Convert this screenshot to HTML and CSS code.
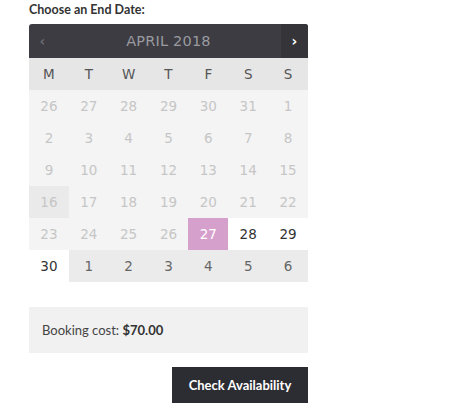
FILE: index.html
```html
<!DOCTYPE html>
<html>
<head>
<meta charset="utf-8">
<link rel="stylesheet" href="styles.css">
</head>
<body>
<div class="wrap">
  <div class="title">Choose an End Date:</div>
  <div class="cal">
    <div class="cal-head">
      <span class="nav prev">&#8249;</span>
      <span class="month">APRIL 2018</span>
      <span class="nav next">&#8250;</span>
    </div>
    <div class="grid">
      <div class="wd">M</div><div class="wd">T</div><div class="wd">W</div><div class="wd">T</div><div class="wd">F</div><div class="wd">S</div><div class="wd">S</div>
      <div class="d off">26</div><div class="d off">27</div><div class="d off">28</div><div class="d off">29</div><div class="d off">30</div><div class="d off">31</div><div class="d off">1</div>
      <div class="d off">2</div><div class="d off">3</div><div class="d off">4</div><div class="d off">5</div><div class="d off">6</div><div class="d off">7</div><div class="d off">8</div>
      <div class="d off">9</div><div class="d off">10</div><div class="d off">11</div><div class="d off">12</div><div class="d off">13</div><div class="d off">14</div><div class="d off">15</div>
      <div class="d off today">16</div><div class="d off">17</div><div class="d off">18</div><div class="d off">19</div><div class="d off">20</div><div class="d off">21</div><div class="d off">22</div>
      <div class="d off">23</div><div class="d off">24</div><div class="d off">25</div><div class="d off">26</div><div class="d sel">27</div><div class="d av">28</div><div class="d av">29</div>
      <div class="d av">30</div><div class="d nx">1</div><div class="d nx">2</div><div class="d nx">3</div><div class="d nx">4</div><div class="d nx">5</div><div class="d nx">6</div>
    </div>
  </div>
  <div class="cost">Booking cost: <strong>$70.00</strong></div>
  <div class="actions"><button class="btn">Check Availability</button></div>
</div>
</body>
</html>
```
FILE: styles.css
```css
html, body { margin: 0; padding: 0; background: #fff; }
.wrap { width: 279px; padding: 2px 0 0 29px; font-family: "Lato", "Liberation Sans", sans-serif; }
.title { font-weight: 700; font-size: 12.5px; color: #333; line-height: 16px; height: 22px; }
.cal { width: 279px; }
.cal-head {
  background: #3c3c42; height: 34px; border-radius: 3px 3px 0 0;
  display: flex; align-items: center;
}
.nav { width: 27px; height: 34px; display: flex; align-items: center; justify-content: center; font-family: "DejaVu Sans", sans-serif; font-size: 14px; font-weight: 700; }
.prev { color: #6b6b70; }
.next { color: #fff; background: #343439; border-radius: 0 3px 0 0; }
.month { flex: 1; text-align: center; color: #9a9aa0; font-family: "DejaVu Sans", sans-serif; font-size: 14.5px; letter-spacing: 0.2px; }
.grid { display: grid; grid-template-columns: repeat(7, 1fr); background: #f4f4f4; }
.wd { background: #e6e6e6; height: 32px; line-height: 32px; text-align: center; color: #555; font-family: "DejaVu Sans", sans-serif; font-size: 13.5px; }
.d { height: 32px; line-height: 32px; text-align: center; font-family: "DejaVu Sans", sans-serif; font-size: 13.5px; }
.off { color: #c6c6c6; }
.today { background: #eaeaea; }
.sel { background: #d6a0cd; color: #fff; }
.av { background: #fff; color: #333; }
.nx { background: #ebebeb; color: #666; }
.cost { margin-top: 25px; background: #f1f1f1; height: 46px; line-height: 46px; padding-left: 13px; font-size: 13px; color: #444; }
.cost strong { color: #333; }
.actions { display: flex; justify-content: flex-end; margin-top: 14px; }
.btn { background: #2c2c33; color: #fff; border: 0; height: 36px; width: 136px; font-family: "Lato", "Liberation Sans", sans-serif; font-weight: 700; font-size: 13px; padding: 0; }
```
